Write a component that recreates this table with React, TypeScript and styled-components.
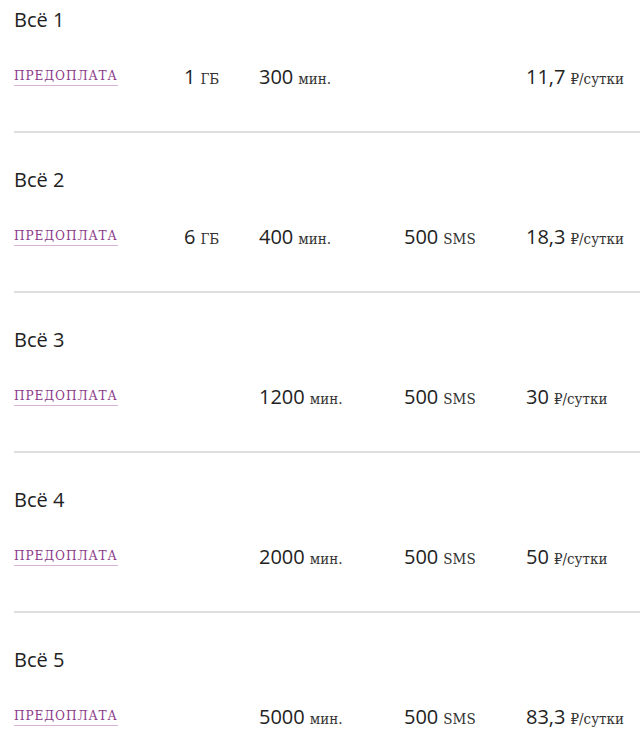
import React from "react";
import styled, { createGlobalStyle } from "styled-components";

const Global = createGlobalStyle`
  html, body { margin: 0; padding: 0; background: #fff; }
  body { font-family: "Open Sans", "Noto Sans", sans-serif; color: #222; }
`;

const Page = styled.div`
  padding: 0 0 0 14px;
  overflow: hidden;
`;

const Section = styled.section<{ $first?: boolean }>`
  padding-top: ${(p) => (p.$first ? "0" : "27px")};
  padding-bottom: 40px;
  border-bottom: 2px solid #dedede;
`;

const Title = styled.h2`
  margin: 0;
  padding-top: 6px;
  font-family: "Open Sans", sans-serif;
  font-weight: 400;
  font-size: 20px;
  line-height: 28px;
  color: #222;
`;

const Row = styled.div`
  display: grid;
  grid-template-columns: 170px 75px 145px 122px 1fr;
  align-items: start;
  margin-top: 31px;
`;

const Plan = styled.a`
  justify-self: start;
  margin-top: 1px;
  font-family: "DejaVu Serif Condensed", "DejaVu Serif", serif;
  font-stretch: condensed;
  font-size: 13.5px;
  letter-spacing: 0.9px;
  color: #8c3a8a;
  text-decoration: none;
  border-bottom: 1px solid #d9b3d6;
  line-height: 18px;
  padding-bottom: 1px;
`;

const Value = styled.span`
  font-family: "Open Sans", sans-serif;
  font-size: 20px;
  line-height: 24px;
  color: #222;
  white-space: nowrap;
`;

const Unit = styled.span`
  font-family: "DejaVu Serif Condensed", "DejaVu Serif", serif;
  font-stretch: condensed;
  font-size: 15px;
  color: #333;
  margin-left: 5px;
`;

type Tariff = {
  name: string;
  gb?: string;
  min: string;
  sms?: string;
  price: string;
};

const tariffs: Tariff[] = [
  { name: "Всё 1", gb: "1", min: "300", price: "11,7" },
  { name: "Всё 2", gb: "6", min: "400", sms: "500", price: "18,3" },
  { name: "Всё 3", min: "1200", sms: "500", price: "30" },
  { name: "Всё 4", min: "2000", sms: "500", price: "50" },
  { name: "Всё 5", min: "5000", sms: "500", price: "83,3" },
];

export default function App() {
  return (
    <Page>
      <Global />
      {tariffs.map((t, i) => (
        <Section key={t.name} $first={i === 0}>
          <Title>{t.name}</Title>
          <Row>
            <Plan href="#">ПРЕДОПЛАТА</Plan>
            <Value>{t.gb && <>{t.gb}<Unit>ГБ</Unit></>}</Value>
            <Value>{t.min}<Unit>мин.</Unit></Value>
            <Value>{t.sms && <>{t.sms}<Unit>SMS</Unit></>}</Value>
            <Value>{t.price}<Unit>₽/сутки</Unit></Value>
          </Row>
        </Section>
      ))}
    </Page>
  );
}
